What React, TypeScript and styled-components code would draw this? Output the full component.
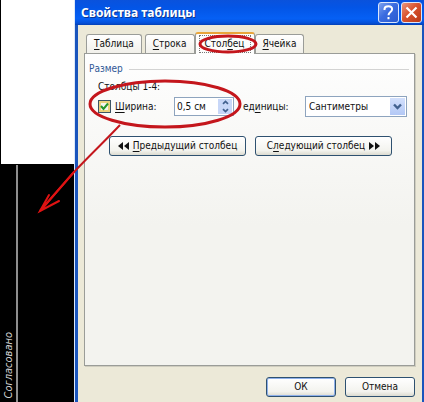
import React, { useState } from "react";
import styled, { createGlobalStyle, css } from "styled-components";

const GlobalStyle = createGlobalStyle`
  * { box-sizing: border-box; }
  body {
    margin: 0;
    background: #000;
    font: 10px/16px "DejaVu Sans Condensed", Tahoma, sans-serif;
    color: #111;
  }
  button, input, select { font: inherit; color: inherit; margin: 0; }
  u { text-underline-offset: 2px; }
`;

const Screen = styled.main`
  position: relative;
  display: grid;
  grid-template-columns: 74px minmax(0, 1fr);
  min-height: 100vh;
  overflow: hidden;
`;

const Sheet = styled.section`
  display: grid;
  grid-template-rows: 164px 1fr;
  padding-left: 1px;
  background: #000;
`;

const BlankPaper = styled.div`
  background: #fff;
`;

const Drawing = styled.div`
  display: grid;
  grid-template-columns: 17px 1fr;
  padding-top: 1px;
`;

const StampColumn = styled.div`
  display: flex;
  align-items: flex-end;
  justify-content: flex-end;
  padding-bottom: 4px;
  border-right: 2px solid #8e8e8e;
`;

const StampText = styled.span`
  writing-mode: vertical-rl;
  transform: rotate(180deg);
  font: italic 11px/14px "DejaVu Sans Condensed", "Noto Sans", sans-serif;
  color: #d4d4d4;
`;

const Dialog = styled.section`
  display: flex;
  flex-direction: column;
  border: solid #1a55bd;
  border-width: 0 2px 0 3px;
  background: #ece9d8;
  box-shadow: -1px 0 #dce9fa;
  margin-left: 1px;
`;

const TitleBar = styled.header`
  display: flex;
  align-items: center;
  gap: 2px;
  height: 25px;
  margin: 0 -2px 0 -3px;
  padding: 0 2px 0 6px;
  background: linear-gradient(#0a52dc, #0355e6 30%, #0560f5 75%, #0450d8 92%, #033fb4);
`;

const Title = styled.h1`
  flex: 1;
  margin: 0;
  font: bold 12px/20px "Noto Sans", Tahoma, sans-serif;
  color: #fff;
  text-shadow: 1px 1px #0a3694;
`;

const CaptionButton = styled.button<{ $danger?: boolean }>`
  display: grid;
  place-items: center;
  width: 21px;
  height: 21px;
  padding: 0;
  border: 1px solid #dbe6fb;
  border-radius: 3px;
  background: ${(p) =>
    p.$danger
      ? "linear-gradient(135deg, #e9967c, #d9532f 45%, #b93a18)"
      : "linear-gradient(135deg, #7da2ee, #3a6be0 45%, #2a5bd0)"};
`;

const Body = styled.div`
  flex: 1;
  display: flex;
  flex-direction: column;
  padding: 7px 7px 5px 6px;
`;

const TabList = styled.div`
  display: flex;
  align-items: flex-end;
  padding-left: 2px;
`;

const Tab = styled.button<{ $active: boolean }>`
  height: 19px;
  padding: 0 6px;
  border: 1px solid #9a9c98;
  border-bottom: 0;
  border-radius: 3px 3px 0 0;
  background: linear-gradient(#fff, #f1f0ea);
  line-height: 18px;
  white-space: nowrap;

  &:first-child { margin-right: 3px; }

  ${(p) =>
    p.$active &&
    css`
      position: relative;
      height: 22px;
      margin-bottom: -1px;
      padding: 0 3px;
      border-top: 2px solid #e9a53a;
      background: #fdfdfc;
    `}
`;

const FocusFrame = styled.span<{ $on: boolean }>`
  display: block;
  padding: 0 5px;
  margin: ${(p) => (p.$on ? "0" : "0 -5px")};
  border: 1px dotted ${(p) => (p.$on ? "#777" : "transparent")};
  line-height: 16px;
`;

const Panel = styled.div`
  flex: 1;
  padding: 7px 5px 7px 4px;
  border: 1px solid #9a9c98;
  background: linear-gradient(#fefefe, #f3f3ef 55%);
  box-shadow: 1px 1px #cfcdbf;
`;

const Group = styled.fieldset`
  min-width: 0;
  margin: 0;
  padding: 0;
  border: 0;
`;

const GroupTitle = styled.legend`
  display: flex;
  align-items: center;
  gap: 6px;
  width: 100%;
  padding: 0;
  color: #2f5796;

  &::after {
    content: "";
    flex: 1;
    border-top: 1px solid #d3d3d3;
  }
`;

const Caption = styled.p`
  margin: 2px 0 0;
  padding-left: 9px;
`;

const FieldRow = styled.div`
  display: flex;
  align-items: center;
  margin-top: 1px;
  padding: 0 2px 0 9px;
`;

const CheckLabel = styled.label`
  display: flex;
  align-items: center;
  gap: 4px;
  width: 76px;
`;

const Check = styled.span`
  display: grid;
  width: 13px;
  height: 13px;

  > * { grid-area: 1 / 1; }
`;

const CheckInput = styled.input`
  appearance: none;
  width: 13px;
  height: 13px;
  border: 1px solid #3c5564;
  background: #f6f5ef;
  box-shadow: inset 0 0 0 2px #ecd27c;

  & + svg { visibility: hidden; pointer-events: none; }
  &:checked + svg { visibility: visible; }
`;

const Spinner = styled.div`
  display: flex;
  width: 60px;
  height: 19px;
  padding: 1px;
  border: 1px solid #8ea4be;
  background: #fff;
`;

const SpinnerInput = styled.input`
  flex: 1;
  min-width: 0;
  padding: 0 0 0 1px;
  border: 0;
  background: none;
`;

const SpinnerButtons = styled.span`
  display: grid;
  grid-template-rows: 1fr 1fr;
  width: 14px;
`;

const SpinnerButton = styled.button`
  display: grid;
  place-items: center;
  min-height: 0;
  padding: 0;
  border: 0;
  background: #c8d7f8;
`;

const UnitLabel = styled.label`
  flex: 1;
  padding: 0 8px 0 9px;
  white-space: nowrap;
`;

const SelectBox = styled.span`
  display: grid;
  width: 102px;

  > * { grid-area: 1 / 1; }
`;

const Select = styled.select`
  appearance: none;
  height: 21px;
  padding: 0 18px 0 3px;
  border: 1px solid #8ea4be;
  border-radius: 0;
  background: #fff;
`;

const SelectArrow = styled.span`
  justify-self: end;
  display: grid;
  place-items: center;
  width: 15px;
  margin: 2px;
  background: linear-gradient(#d3e0fc, #b3c8f5);
  pointer-events: none;
`;

const ButtonRow = styled.div`
  display: flex;
  gap: 9px;
  padding: 19px 17px 0 20px;
`;

const Footer = styled.footer`
  display: flex;
  justify-content: flex-end;
  gap: 9px;
  padding-top: 11px;
`;

const PushButton = styled.button<{ $wide?: boolean; $default?: boolean }>`
  display: flex;
  align-items: center;
  justify-content: center;
  gap: 4px;
  flex: ${(p) => (p.$wide ? "1 1 0" : "0 0 70px")};
  height: 20px;
  padding: 0;
  border: 1px solid #2e5170;
  border-radius: 3px;
  background: linear-gradient(#fff, #f3f3ee 75%, #dcdbd0);
  line-height: 16px;
  white-space: nowrap;
  ${(p) => p.$default && "box-shadow: inset 0 0 0 1px #8fb0ea;"}
`;

const Markup = styled.svg`
  position: absolute;
  top: 0;
  left: 0;
  pointer-events: none;
`;

const tabs = [
  ["", "Т", "аблица"],
  ["", "С", "трока"],
  ["Стол", "б", "ец"],
  ["", "Я", "чейка"],
];

const DoubleArrow = ({ back }: { back?: boolean }) => (
  <svg width="11" height="8" viewBox="0 0 11 8" aria-hidden="true">
    <path d={back ? "M5 0v8L0 4zM11 0v8L6 4z" : "M0 0v8l5-4zM6 0v8l5-4z"} fill="#111" />
  </svg>
);

const Chevron = ({ up, large }: { up?: boolean; large?: boolean }) => (
  <svg width={large ? 9 : 7} height={large ? 7 : 5} viewBox="0 0 9 7" aria-hidden="true">
    <path d={up ? "M1 5.5l3.5-3.5L8 5.5" : "M1 1.5L4.5 5 8 1.5"} fill="none" stroke="#42618f" strokeWidth="2.4" />
  </svg>
);

export default function App() {
  const [active, setActive] = useState(2);
  const [enabled, setEnabled] = useState(true);
  const [width, setWidth] = useState(0.5);

  const step = (delta: number) => setWidth((w) => Math.max(0, Math.round((w + delta) * 10) / 10));

  return (
    <>
      <GlobalStyle />
      <Screen lang="ru">
        <Sheet>
          <BlankPaper />
          <Drawing>
            <StampColumn>
              <StampText>Согласовано</StampText>
            </StampColumn>
          </Drawing>
        </Sheet>

        <Dialog role="dialog" aria-labelledby="dialog-title">
          <TitleBar>
            <Title id="dialog-title">Свойства таблицы</Title>
            <CaptionButton aria-label="Справка">
              <svg width="13" height="15" viewBox="0 0 13 15" fill="none" stroke="#fff" strokeWidth="2">
                <path d="M2.5 5V3.8C2.7 2 4.3 1.2 6.3 1.2c2.2 0 3.8 1.1 3.8 3 0 2.8-3.6 2.8-3.6 6M6.5 12v2.2" />
              </svg>
            </CaptionButton>
            <CaptionButton $danger aria-label="Закрыть">
              <svg width="13" height="13" viewBox="0 0 13 13" stroke="#fff" strokeWidth="2.2">
                <path d="M1.5 1.5l10 10M11.5 1.5l-10 10" />
              </svg>
            </CaptionButton>
          </TitleBar>

          <Body>
            <TabList role="tablist">
              {tabs.map(([before, key, after], i) => (
                <Tab key={after} role="tab" aria-selected={active === i} $active={active === i} onClick={() => setActive(i)}>
                  <FocusFrame $on={active === i}>
                    {before}
                    <u>{key}</u>
                    {after}
                  </FocusFrame>
                </Tab>
              ))}
            </TabList>

            <Panel role="tabpanel">
              <Group>
                <GroupTitle>Размер</GroupTitle>
                <Caption>Столбцы 1-4:</Caption>
                <FieldRow>
                  <CheckLabel>
                    <Check>
                      <CheckInput type="checkbox" checked={enabled} onChange={(e) => setEnabled(e.target.checked)} />
                      <svg width="13" height="13" viewBox="0 0 13 13" aria-hidden="true">
                        <path d="M3 6l2.5 3L10 3.5" fill="none" stroke="#25962b" strokeWidth="2" />
                      </svg>
                    </Check>
                    <span>
                      <u>Ш</u>ирина:
                    </span>
                  </CheckLabel>
                  <Spinner>
                    <SpinnerInput aria-label="Ширина" value={`${String(width).replace(".", ",")} см`} readOnly />
                    <SpinnerButtons>
                      <SpinnerButton aria-label="Увеличить" onClick={() => step(0.1)}>
                        <Chevron up />
                      </SpinnerButton>
                      <SpinnerButton aria-label="Уменьшить" onClick={() => step(-0.1)}>
                        <Chevron />
                      </SpinnerButton>
                    </SpinnerButtons>
                  </Spinner>
                  <UnitLabel htmlFor="unit">
                    ед<u>и</u>ницы:
                  </UnitLabel>
                  <SelectBox>
                    <Select id="unit">
                      <option>Сантиметры</option>
                    </Select>
                    <SelectArrow>
                      <Chevron large />
                    </SelectArrow>
                  </SelectBox>
                </FieldRow>
                <ButtonRow>
                  <PushButton $wide>
                    <DoubleArrow back />
                    <span>
                      <u>П</u>редыдущий столбец
                    </span>
                  </PushButton>
                  <PushButton $wide>
                    <span>
                      С<u>л</u>едующий столбец
                    </span>
                    <DoubleArrow />
                  </PushButton>
                </ButtonRow>
              </Group>
            </Panel>

            <Footer>
              <PushButton $default>ОК</PushButton>
              <PushButton>Отмена</PushButton>
            </Footer>
          </Body>
        </Dialog>

        <Markup width="424" height="402" viewBox="0 0 424 402" fill="none" stroke="#c4161c" strokeWidth="3" aria-hidden="true">
          <ellipse cx="228" cy="44" rx="28" ry="8" />
          <ellipse cx="165" cy="104" rx="75" ry="23" />
          <path d="M120 125C100 146 94 151 74 172L40 211" strokeWidth="2" />
          <path d="M74 172L40 211M49 195L40 211L59 201" stroke="#e01212" strokeWidth="2" strokeLinecap="round" />
        </Markup>
      </Screen>
    </>
  );
}
